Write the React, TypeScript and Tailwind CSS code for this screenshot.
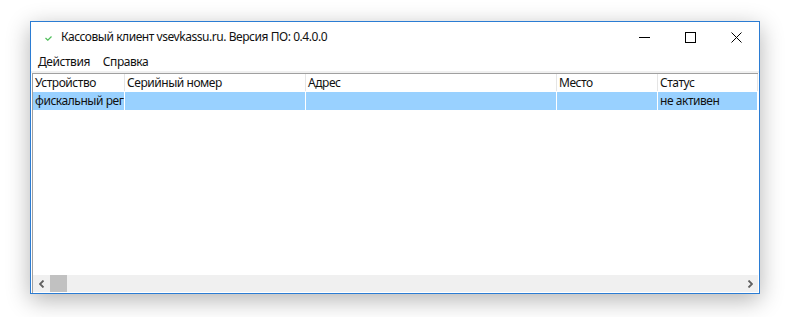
import React from "react";

const columns = [
  { title: "Устройство", width: "w-[92px]", value: "фискальный регистратор" },
  { title: "Серийный номер", width: "w-[181px]", value: "" },
  { title: "Адрес", width: "w-[251px]", value: "" },
  { title: "Место", width: "w-[101px]", value: "" },
  { title: "Статус", width: "flex-1", value: "не активен" },
];

function CheckIcon() {
  return (
    <svg width="7" height="5" viewBox="0 0 7 5" className="mt-[3px]">
      <path d="M0.5 2 L2.8 4.2 L6.5 0.5" fill="none" stroke="#4fbf5a" strokeWidth="1.2" />
    </svg>
  );
}

function WindowButtons() {
  return (
    <div className="flex h-full">
      <div className="flex h-full w-[46px] items-center justify-center">
        <div className="mt-[1px] h-px w-[11px] bg-black" />
      </div>
      <div className="flex h-full w-[46px] items-center justify-center">
        <div className="h-[11px] w-[11px] border border-black" />
      </div>
      <div className="flex h-full w-[46px] items-center justify-center">
        <svg width="11" height="11" viewBox="0 0 11 11">
          <path d="M0.5 0.5 L10.5 10.5 M10.5 0.5 L0.5 10.5" stroke="#000" strokeWidth="1" />
        </svg>
      </div>
    </div>
  );
}

function Scrollbar() {
  return (
    <div className="flex h-[17px] bg-[#f0f0f0]">
      <div className="flex w-[17px] items-center justify-center">
        <svg width="6" height="8" viewBox="0 0 6 8">
          <path d="M4.5 0.5 L1 4 L4.5 7.5" fill="none" stroke="#606060" strokeWidth="1.8" />
        </svg>
      </div>
      <div className="h-full w-[17px] bg-[#c1c1c1]" />
      <div className="flex-1" />
      <div className="flex w-[17px] items-center justify-center">
        <svg width="6" height="8" viewBox="0 0 6 8">
          <path d="M1.5 0.5 L5 4 L1.5 7.5" fill="none" stroke="#606060" strokeWidth="1.8" />
        </svg>
      </div>
    </div>
  );
}

export default function App() {
  return (
    <div
      className="h-[317px] w-[791px] overflow-hidden bg-white pl-[30px] pt-[21px] text-[12px] tracking-[-0.45px] text-[#111]"
      style={{ fontFamily: '"Segoe UI", "Noto Sans", sans-serif' }}
    >
      <div className="flex h-[273px] w-[730px] flex-col border border-[#2b7cd3] bg-white shadow-[0_6px_22px_rgba(0,0,0,0.3)]">
        <div className="flex h-[30px] items-center">
          <div className="flex items-center pl-[14px]">
            <CheckIcon />
          </div>
          <div className="pl-[9px]">Кассовый клиент vsevkassu.ru. Версия ПО: 0.4.0.0</div>
          <div className="flex-1" />
          <WindowButtons />
        </div>
        <div className="flex h-[19px] items-center pl-[7px]">
          <div>Действия</div>
          <div className="pl-[13px]">Справка</div>
        </div>
        <div className="h-[2px] bg-[#f0f0f0]" />
        <div className="ml-px mr-px flex flex-1 flex-col border-l border-t border-[#a0a0a0]">
          <div className="flex h-[18px] border-b border-white">
            {columns.map((c) => (
              <div
                key={c.title}
                className={`${c.width} flex items-center overflow-hidden whitespace-nowrap border-r border-[#e5e5e5] pl-[2px]`}
              >
                {c.title}
              </div>
            ))}
          </div>
          <div className="flex h-[18px] bg-[#99d1ff]">
            {columns.map((c) => (
              <div
                key={c.title}
                className={`${c.width} flex items-center overflow-hidden whitespace-nowrap border-r border-white pl-[2px]`}
              >
                {c.value}
              </div>
            ))}
          </div>
          <div className="flex-1" />
          <Scrollbar />
          <div className="h-px" />
        </div>
      </div>
    </div>
  );
}
